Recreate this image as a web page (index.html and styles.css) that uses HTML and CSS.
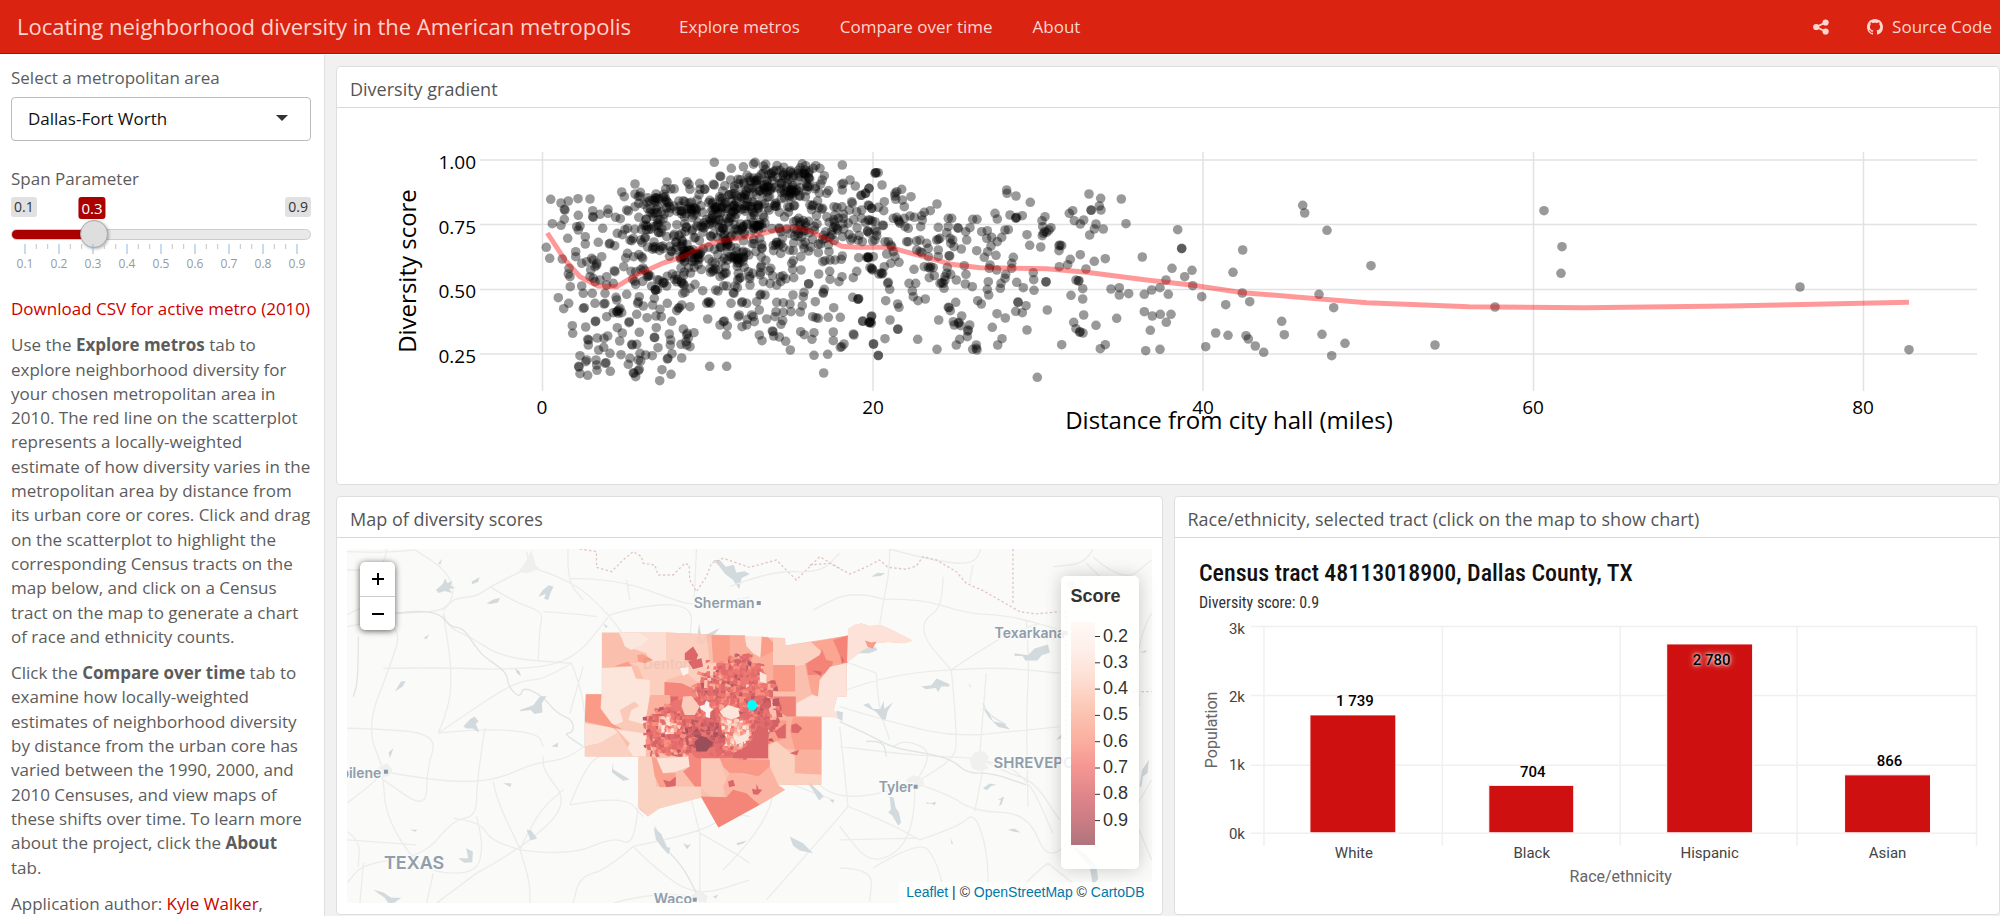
FILE: index.html
```html
<!DOCTYPE html>
<html lang="en">
<head>
<meta charset="utf-8">
<title>Locating neighborhood diversity in the American metropolis</title>
<link rel="stylesheet" href="styles.css">
</head>
<body>
<header class="navbar">
  <a class="brand" href="#">Locating neighborhood diversity in the American metropolis</a>
  <nav class="nav-links">
    <a href="#">Explore metros</a>
    <a href="#">Compare over time</a>
    <a href="#">About</a>
  </nav>
  <div class="nav-tools">
    <a href="#" aria-label="Share">
      <svg class="icon" viewBox="0 0 16 16"><g fill="currentColor"><circle cx="3.2" cy="8" r="3.1"/><circle cx="12.6" cy="3.5" r="3.1"/><circle cx="12.6" cy="12.5" r="3.1"/></g><path d="M12.6 3.5L3.2 8l9.4 4.5" fill="none" stroke="currentColor" stroke-width="1.9"/></svg>
    </a>
    <a href="#">
      <svg class="icon" viewBox="0 0 16 16"><path fill="currentColor" d="M8 0C3.58 0 0 3.58 0 8c0 3.54 2.29 6.53 5.47 7.59.4.07.55-.17.55-.38 0-.19-.01-.82-.01-1.49-2.01.37-2.53-.49-2.69-.94-.09-.23-.48-.94-.82-1.13-.28-.15-.68-.52-.01-.53.63-.01 1.08.58 1.23.82.72 1.21 1.87.87 2.33.66.07-.52.28-.87.51-1.07-1.78-.2-3.64-.89-3.64-3.95 0-.87.31-1.59.82-2.15-.08-.2-.36-1.02.08-2.12 0 0 .67-.21 2.2.82.64-.18 1.32-.27 2-.27s1.36.09 2 .27c1.53-1.04 2.2-.82 2.2-.82.44 1.1.16 1.92.08 2.12.51.56.82 1.27.82 2.15 0 3.07-1.87 3.75-3.65 3.95.29.25.54.73.54 1.48 0 1.07-.01 1.93-.01 2.2 0 .21.15.46.55.38A8.01 8.01 0 0 0 16 8c0-4.42-3.58-8-8-8z"/></svg>
      <span>Source Code</span>
    </a>
  </div>
</header>

<div class="page">
  <aside class="sidebar">
    <label class="field-label" for="metro">Select a metropolitan area</label>
    <div class="select-wrap">
      <select id="metro" class="select"><option>Dallas-Fort Worth</option></select>
      <svg class="caret" viewBox="0 0 12 6"><path d="M0 0h12L6 6z" fill="#333"/></svg>
    </div>
    <label class="field-label" for="span">Span Parameter</label>
    <div class="slider">
      <div class="slider-tags"><span class="tag">0.1</span><span class="tag">0.9</span><output class="tag tag-value" for="span">0.3</output></div>
      <input id="span" class="range" type="range" min="0.1" max="0.9" step="0.1" value="0.3">
      <svg class="scale" id="scale" viewBox="0 0 300 32"></svg>
    </div>
    <p><a class="link" href="#">Download CSV for active metro (2010)</a></p>
    <p>Use the <b>Explore metros</b> tab to explore neighborhood diversity for your chosen metropolitan area in 2010. The red line on the scatterplot represents a locally-weighted estimate of how diversity varies in the metropolitan area by distance from its urban core or cores. Click and drag on the scatterplot to highlight the corresponding Census tracts on the map below, and click on a Census tract on the map to generate a chart of race and ethnicity counts.</p>
    <p>Click the <b>Compare over time</b> tab to examine how locally-weighted estimates of neighborhood diversity by distance from the urban core has varied between the 1990, 2000, and 2010 Censuses, and view maps of these shifts over time. To learn more about the project, click the <b>About</b> tab.</p>
    <p>Application author: <a class="link" href="#">Kyle Walker</a>,</p>
  </aside>

  <main class="main">
    <section class="card">
      <h2 class="card-title">Diversity gradient</h2>
      <svg class="chart" viewBox="337 108 1662 376" role="img" aria-label="Diversity score by distance from city hall">
        <path class="grid" d="M480 160H1977M480 224.500H1977M480 289.500H1977M480 354H1977M542.500 152V391M873 152V391M1203 152V391M1533.500 152V391M1863.500 152V391"/>
        <g id="dots" class="dots"></g>
        <polyline class="trend" points="547.3,233 565,260 580,276.700 598,286 616.700,286.700 633,276.700 663,263 685,256 701.700,246.700 716.700,241.700 751.700,236 790,227 806.700,230 825,238 841.700,246.300 856.700,247.300 889,247.300 926.700,257.300 951.700,264.300 980,267.700 1046.700,268.700 1086.700,272.300 1146.700,280 1193,285.300 1243,292.700 1293,296.700 1367,302.700 1469,306.700 1585,307.700 1728,306 1909,302.300"/>
        <g class="tick-text end"><text x="476" y="169">1.00</text><text x="476" y="234">0.75</text><text x="476" y="298">0.50</text><text x="476" y="363">0.25</text></g>
        <g class="tick-text mid"><text x="542" y="414">0</text><text x="873" y="414">20</text><text x="1203" y="414">40</text><text x="1533" y="414">60</text><text x="1863" y="414">80</text></g>
        <text class="axis-text mid" x="1229" y="429">Distance from city hall (miles)</text>
        <text class="axis-text mid" transform="translate(416 271) rotate(-90)">Diversity score</text>
      </svg>
    </section>

    <section class="card">
      <h2 class="card-title">Map of diversity scores</h2>
      <div class="map">
        <svg class="map-canvas" viewBox="347 549 805 354" preserveAspectRatio="xMidYMid slice" role="img" aria-label="Census tracts around Dallas-Fort Worth">
          <rect x="340" y="540" width="830" height="380" fill="#fafaf8"/>
          <g transform="translate(330 480) scale(.33333)">
            <path class="road" d="M51 405L110 370L150 400L240 400L340 392L370 355L440 350L480 320L600 262M340 392L380 352L350 270L250 207M170 207L165 270L51 270M51 215L160 218L250 210M600 262L590 215M600 262L720 295L840 405L900 495M720 295L860 295L1060 370L1100 372M715 207L710 300L760 360M480 320L550 365L640 395L630 440L625 540M340 400L350 440L420 470L520 535L725 550M160 565L365 563L530 570L725 550L840 405M725 550L640 600L580 600L500 640L325 760M725 550L765 650L765 800M51 440L140 420L215 450L180 560L110 740L160 870M51 745L110 745L325 760L290 870L290 990L160 900M325 760L360 680L365 560L340 400M325 760L465 745L625 760L640 800M160 875L320 905L490 905L610 850L700 840L765 800M465 745L440 905L440 1010L370 1020L280 1130L100 1150L51 1210M51 970L130 910L160 875L165 1000L240 1130L310 1180L440 1180L460 1100L440 1010M440 1180L570 1110L720 975L640 870L640 830M570 1110L720 1130L850 1070L910 1100L930 940M570 1110L600 1200L600 1270M440 1180L320 1270M490 905L500 960L570 1105M720 975L880 945L940 1010M720 975L770 850L830 820M370 1015L450 1025L480 1080L570 1110M910 1100L1110 1060L1200 1000L1260 1010M910 1100L830 1170L750 1190L730 1270M910 1100L990 1180L1105 1250L1260 1200M1110 1060L1085 960M1110 1060L1110 1270M850 1270L960 1240L1105 1250M1110 1060L1200 1110L1260 1150M51 1080L260 1095M100 1150L90 1270M310 1180L290 1270M900 360L890 300M840 405L960 370L1090 380L1080 470M1100 207L1095 330L1090 380L1260 352M640 395L720 400L800 410M720 700L760 560M51 1055L90 1080L85 1160M570 1110L620 1000L700 930"/>
            <path class="river" d="M200 400L250 392L330 400L360 440L400 445L430 490L460 530L530 575L535 620L570 655L580 620L640 650L680 700L730 720L730 760L700 760L760 800M85 470L85 600L70 650M975 1040L1010 1110L1050 1150L1080 1200L1105 1250"/>
            <path class="lake" d="M318 330l20-18 8-17 6 14 16-6-6 14 14 6-18 4 8 12-22-6-18 6zM470 370l22-12 18-4-6 14-22 4zM625 350l14-20 18-14 14 4-8 16-8 24-12-4 4-14zM425 305l24-14-4 14-18 8zM325 250l12-14-6 18zM195 635l18-30 14-2-8 16zM280 475l18-12-8 14zM400 740l20-22 14-8 12 14-8 8 10 26-20-12-18 0zM570 690l40-14 20-26 20-2-14 22 2 28-24 4-12-12-30 4zM180 835l-4-18 14-12zM665 800l20-12-2 14zM850 845l0 24 50 30-20 4-34-26zM520 910l24 0-2 12zM385 1135l30 0-6-30 20 10-2 32-24 2zM590 1050l14 2 18 24-20 6zM972 1044l22 18 18 40 10 2-6 20-20-22-18-24zM1060 1090l12 18 12-16-10 4zM1220 1090l30-8-8 8-18 6zM130 1230l30 8 24 16 30 0-20 14-16 6-14-20zM1150 240l20 0 18 20 24-6 8 24 24-4 16 8-24 12-8 34-18-28-24-18-18-24zM1100 490l8-60 8 50 14-16 40-20-20 24-20 16-16 12zM555 565l14 10 4 14-12-10zM240 1050l22 0-6 6zM820 430l14 10-6 4zM1150 1250l16-6-8 12z"/>
            <path class="border" d="M750 207L800 215L800 262L845 275L880 240L910 215L935 230L940 250L975 255L985 285L1030 285L1065 250L1078 255L1080 300L1100 335L1130 290L1145 250L1180 235L1260 262L1340 240L1400 300L1470 230L1530 265"/>
            <path fill="#efefee" d="M590 240l14-30 14 46 12 10-40 14-24-4zM140 865l30-14 18 18-10 18-30 10zM1080 1250l30-20 24 20-6 20z"/>
          </g>
          <g transform="translate(840 540) scale(.33333)">
            <path class="road" d="M150 27L150 90L132 178L120 255M132 178L240 175L380 220L480 225L560 240L660 270M132 178L40 150L-80 210M310 110L310 200L250 240L255 300L335 390M150 27L270 60L400 75L425 27M400 75L390 130M335 390L480 290L600 250M335 390L110 400L-200 560M335 390L355 600L340 660L225 730M335 390L460 380L660 400M440 400L430 520L420 650M560 240L570 380L560 500L565 800M0 500L200 560L355 590L520 575L660 560M0 620L160 640L300 650L420 655L560 700L640 880M225 730L25 800L-120 690M225 730L230 890L100 985L0 860M225 730L290 640L200 600L160 620M225 730L320 760L405 815L565 820L625 970L720 870M405 815L440 650L420 655M100 985L240 900L290 960L320 1080M240 900L360 860L405 815L445 940L445 1085M0 985L100 985L90 1085M25 800L10 650L0 560M110 400L115 500L150 600M625 970L560 1020L530 1085M625 970L700 1030M0 900L230 895M420 655L500 700L580 720L660 840M240 900L150 850L25 800M760 27L740 70L640 80M760 50L850 130L936 60M740 70L780 110M936 220L890 300L900 500M936 720L890 800M890 850L936 960M-180 720L-20 780M-350 990L-240 880L-180 720L-350 640M-180 720L-160 560M-220 1080L-60 900L25 800M-330 140L-200 90L-60 100L0 40M-120 380L-20 350L110 400"/>
            <path class="river" d="M0 545L80 580L160 625L260 640L340 660L380 700L460 700L560 735M80 605L130 600L140 650M430 490L440 520L500 555"/>
            <path class="lake" d="M95 110l18-12 24 2-14 8zM55 340l20-14 34-4 4 8-24 10zM70 495l16-6 14 18 22 0 10-24 2 24 26-20-16 26-6 26-10 0-20-24-16-8zM245 440l30-4 16-20 38 16 0 8-24 0-10 16-6-12-30 4zM525 340l40 6 20-20 40-12 6 24-24 8-14 16-36 0-8-14-24 0zM430 505l14 10 18 30 30 6 20 18-36-8-28-28zM-10 512l20 6-2 26-16-10zM150 770l12 4 6 30 10 14 6 30-8 10-18-30-12-10 8-10zM680 130l20-8 40 70-16 6zM700 920l40 24 30 34 6 40-16 20-10-60-30-30zM900 740l8-50 20-30-4 40-14 10-4 30zM505 870l20-4 18 12-20-2zM900 338l22-8-4 8zM474 780l20-10-8 24-8 4 6-18zM260 786l10 4 20-4-6 12-6-6-16 0zM430 745l20-14 20 4-16 4-12 12zM650 600l16-18 6 12zM333 895l8 18-6-2zM-30 780l14 0-4 10zM385 430l12 12-6-2zM-150 890l40 20 30 30-40-8-20-14zM-92 720l14 20 22 20 8 10-14 12-18-30-14-18z"/>
            <path class="border" d="M-90 75L-30 70L30 102L60 90L85 78L120 60L145 82L200 88L230 78L250 50L290 60L350 95L380 130L430 152L480 180L540 215L590 222L660 215M520 27V190M780 455H936M680 215V640"/>
            <path fill="#f0f0ee" d="M390 660l14-22 30-4 14 18-10 20 10 14-30 8-20-8zM200 720l20-14 28 8 6 20-20 14-28-6z"/>
          </g>
          <g class="place"><text x="694" y="608">Sherman</text><text x="995" y="638">Texarkana</text><text x="879" y="792">Tyler</text><text x="654" y="904">Waco</text><text x="330" y="778">Abilene</text><text x="643" y="669">Denton</text></g>
          <g class="place place-city"><text x="994" y="768">SHREVEPORT</text></g>
          <g class="place place-state"><text x="384" y="869">TEXAS</text></g>
          <path d="M757 601h4v4h-4zM1064 631h4v4h-4zM914 785h4v4h-4zM693 898h4v4h-4zM384 770h4v4h-4z" fill="#8a99a9"/>
          <g transform="translate(560 600) scale(.33333)">
            <g class="tracts">
              <path fill="#fbb9a5" d="M126 98L320 98L510 106L555 110L676 114L677 137L865 107L865 88L885 75L905 71L930 78L965 76L1000 92L1058 122L1035 130L985 126L950 130L900 158L862 188L861 290L832 291L822 330L838 352L785 351L785 555L655 555L653 565L676 570L600 615L476 683L424 593L300 625L270 635L265 650L240 630L236 620L236 471L75 470L75 375L78 283L126 283Z"/>
              <path fill="#fddccf" d="M176 98H320V180L314 195L270 190L260 160L200 140Z"/>
              <path fill="#fde6dc" d="M180 98L240 100L265 118L245 135L215 150L195 140Z"/>
              <path fill="#fccab8" d="M320 98L440 103L450 190L480 190V245H410L380 220L320 240L314 285L270 285L235 200L210 190L320 180Z"/>
              <path fill="#fde3d8" d="M126 204L215 200L228 236L270 240V285L258 360V470H190L210 430L165 382L122 330L126 283Z"/>
              <path fill="#fde0d4" d="M75 370L155 382L175 398L120 430L75 440Z"/>
              <path fill="#fbcdbc" d="M75 440L120 430L175 398L220 470H75Z"/>
              <path fill="#fbc4b2" d="M155 380L190 365L180 330L225 305L238 318L215 330L205 360L258 375L255 400L180 390Z"/>
              <path fill="#fb917c" d="M78 283H124L122 325L155 370L188 388L160 384L75 365Z"/>
              <path fill="#fb957f" d="M162 200L205 185L216 198ZM232 165L250 163L280 180L255 190L235 185ZM510 106L455 106L460 188H512ZM605 110L625 112L642 130L640 155L600 175Z"/>
              <path fill="#fca68f" d="M510 106H556L560 140L600 175L640 155V280H610V190H510Z"/>
              <path fill="#fde0d4" d="M555 110H606L602 172L580 160L560 138Z"/>
              <path fill="#fccdbd" d="M640 114H676L677 137L755 127L790 150L770 190L700 200L640 195Z"/>
              <path fill="#fb9e88" d="M755 127L865 107V185L830 200L812 222L780 240L775 290L755 280L735 190L770 190L785 155Z"/>
              <path fill="#f4776b" d="M740 190L780 165L787 148L800 180L820 185L812 222L745 225ZM820 120L865 107V188L845 190L840 165Z"/>
              <path fill="#fde0d6" d="M865 88L885 75L905 71L930 78L965 76L1000 92L1058 122L1035 130L985 126L950 130L900 158L862 188ZM812 200L861 190V290L832 291L822 330L838 352L710 348V310L755 285L775 290L780 240Z"/>
              <path fill="#fb917c" d="M916 122L935 128L950 125L940 146L925 142ZM640 195H706V275H640Z"/>
              <path fill="#f0746a" d="M640 290H708V360L680 350L650 330Z"/>
              <path fill="#fbaa95" d="M630 350H785V525L705 520V450L625 440Z"/>
              <path fill="#fa9580" d="M700 352H785V450H705L690 390ZM630 362H680V415L630 430Z"/>
              <path fill="#fccdbb" d="M628 435L650 425L705 470V520L785 525V555H655L630 500Z"/>
              <path fill="#fbcebc" d="M236 471H280L290 560L424 560V593L300 625L265 650L236 620Z"/>
              <path fill="#fb9883" d="M275 471L290 475L310 520L348 520L345 560L300 562L285 530Z"/>
              <path fill="#fde0d4" d="M290 475L385 471L390 500L350 515L310 520Z"/>
              <path fill="#f57d70" d="M385 460H424V560L405 560L370 515L390 500Z"/>
              <path fill="#fcc2b0" d="M424 475H480L500 540L490 590L455 592L424 565Z"/>
              <path fill="#fa8f7c" d="M480 475L630 480V520L595 530L550 520L510 520L490 500Z"/>
              <path fill="#fbad98" d="M510 520L595 530L630 500L655 555L676 570L600 615L580 600L500 595L490 560Z"/>
              <path fill="#f4796c" d="M424 590L500 592L520 570L560 580L585 603L600 615L476 683Z"/>
              <path fill="#f57a6e" d="M314 246L365 250L420 275L410 290L345 300L314 285Z"/>
              <path fill="#fbab96" d="M272 285H330L340 340H300L258 360Z"/>
              <path fill="#d9575b" d="M332 290H355V350H332ZM375 160L400 140L415 165L408 185L375 180ZM385 185L425 175L430 200L400 208ZM758 212L785 215V230ZM845 168L853 180L848 190ZM645 395L678 370V415L655 415ZM695 375L710 370L728 385L715 400L695 398ZM690 460L718 450L712 466ZM310 540L330 545L348 530V558L320 562ZM505 545L520 540L526 558L508 562ZM577 567L590 570L590 552L597 568L608 570L595 585L580 583ZM645 325L665 340L655 345Z"/>
              <path fill="#e96662" d="M470 190H600L625 300V475H410L395 460H300L262 430V360L345 300L420 290L470 240Z"/>
              <g id="tracts"></g>
              <path fill="#d7565a" d="M520 460L560 440L580 415L590 380L625 385V475H520Z"/>
              <path fill="#8f3c49" d="M405 425L425 408L440 412L460 430L440 455L410 455Z"/>
              <path fill="#fde4da" d="M480 335L505 315L535 325L540 350L515 358L490 350ZM525 415L560 400L568 420L530 435ZM600 215L620 225L620 250L600 245Z"/>
              <path fill="#fcc6b5" d="M370 290L395 288L420 320L405 345L375 345L365 320Z"/>
              <path fill="#fdf3f0" d="M420 318l15-4 4-12 10 6 0 14 12 6-10 8 0 18-12-2-2-16-14-8zM360 205l26-3 0 18-16 8z"/>
            </g>
            <ellipse cx="577" cy="316" rx="15" ry="16" fill="#0ff"/>
          </g>
        </svg>
        <div class="zoom"><button type="button" aria-label="Zoom in"><svg viewBox="0 0 14 14"><path d="M7 1v12M1 7h12"/></svg></button><button type="button" aria-label="Zoom out"><svg viewBox="0 0 14 14"><path d="M1 7h12"/></svg></button></div>
        <div class="legend">
          <strong>Score</strong>
          <svg viewBox="0 0 58 224">
            <defs><linearGradient id="ramp" x1="0" x2="0" y1="0" y2="1"><stop offset="0" stop-color="#fff8f5"/><stop offset=".12" stop-color="#fef0ea"/><stop offset=".25" stop-color="#fddfd3"/><stop offset=".4" stop-color="#fcc5b3"/><stop offset=".53" stop-color="#fbaf9f"/><stop offset=".65" stop-color="#f59693"/><stop offset=".78" stop-color="#df858a"/><stop offset=".9" stop-color="#c97b83"/><stop offset="1" stop-color="#ae757d"/></linearGradient></defs>
            <rect width="24" height="223" fill="url(#ramp)"/>
            <g id="legend-ticks"></g>
          </svg>
        </div>
        <div class="attribution"><a href="#">Leaflet</a> | © <a href="#">OpenStreetMap</a> © <a href="#">CartoDB</a></div>
      </div>
    </section>

    <section class="card">
      <h2 class="card-title">Race/ethnicity, selected tract (click on the map to show chart)</h2>
      <svg class="chart" viewBox="1175 538 825 376" role="img" aria-label="Population by race and ethnicity">
        <text class="bar-title" x="1199" y="581">Census tract 48113018900, Dallas County, TX</text>
        <text class="bar-sub" x="1199" y="608">Diversity score: 0.9</text>
        <path class="bar-grid" d="M1251 626.500H1977M1251 695.500H1977M1251 765.500H1977M1251 833.500H1977M1264 626V846M1442.500 626V846M1620.500 626V846M1797.500 626V846M1977 626V846"/>
        <path class="bars" d="M1310 715h86v118h-86zM1489 785.500h85v47.500h-85zM1667 644h86v189h-86zM1845 775h86v58h-86z"/>
        <g class="bar-tick end"><text x="1245" y="634">3k</text><text x="1245" y="702">2k</text><text x="1245" y="770">1k</text><text x="1245" y="839">0k</text></g>
        <g class="bar-tick mid"><text x="1354" y="858">White</text><text x="1532" y="858">Black</text><text x="1710" y="858">Hispanic</text><text x="1888" y="858">Asian</text></g>
        <g class="bar-value mid"><text x="1355" y="706">1 739</text><text x="1533" y="777">704</text><text class="glow" x="1712" y="665">2 780</text><text x="1890" y="766">866</text></g>
        <text class="bar-axis mid" x="1621" y="882">Race/ethnicity</text>
        <text class="bar-axis mid" transform="translate(1217 730) rotate(-90)">Population</text>
      </svg>
    </section>
  </main>
</div>
<script src="charts.js"></script>
</body>
</html>
```
FILE: styles.css
```css
* { box-sizing: border-box; }
body { margin: 0; font: 17px/1.43 "Open Sans", sans-serif; color: #5c5c5c; background: #f1f1f1; min-height: 100vh; display: flex; flex-direction: column; overflow-x: hidden; }
a { text-decoration: none; }
p { margin: 0 0 12px; }
svg { display: block; }

.navbar { display: flex; align-items: center; height: 54px; flex: none; padding: 1px 8px 0 17px; gap: 48px; background: #da2310; border-bottom: 1px solid #b80b05; box-shadow: 0 1px 0 #fff; position: relative; }
.navbar a { color: #ffd5d0; display: flex; align-items: center; gap: 9px; }
.navbar .brand { font-size: 22px; }
.nav-links { display: flex; gap: 40px; }
.nav-tools { display: flex; gap: 38px; margin-left: auto; }
.icon { width: 16px; height: 16px; }

.page { flex: 1; display: grid; grid-template-columns: 325px 1fr; }
.sidebar { background: #fff; border-right: 1px solid #e0e0e0; padding: 12px 13px 0 11px; }
.sidebar p:last-child { margin: 0; }
.field-label { display: block; line-height: 24px; }
.select-wrap { position: relative; margin: 7px 0 26px; }
.select { appearance: none; width: 100%; height: 44px; padding: 0 16px; border: 1px solid #bbb; border-radius: 4px; background: #fff; font: inherit; color: #111; }
.caret { position: absolute; right: 23px; top: 18px; width: 12px; height: 6px; pointer-events: none; }
.slider { margin-bottom: 25px; padding-top: 6px; }
.slider-tags { position: relative; display: flex; justify-content: space-between; height: 23px; }
.tag { height: 20px; padding: 0 3px; border-radius: 3px; background: #e1e1e1; color: #333; font-size: 14px; line-height: 20px; }
.tag-value { position: absolute; left: 27%; transform: translateX(-50%); height: 22px; background: #a00; color: #fff; line-height: 22px; font-size: 15px; }
.range { appearance: none; display: block; width: 100%; height: 28px; margin: 0; background: none; }
.range::-webkit-slider-runnable-track { height: 11px; border-radius: 6px; border: 1px solid #ccc; background: linear-gradient(90deg, #a00 27%, #e9e9e9 27%); }
.range::-webkit-slider-thumb { appearance: none; width: 28px; height: 28px; margin-top: -10px; border-radius: 50%; border: 1px solid #aaa; background: #dedede; box-shadow: 1px 1px 3px rgba(0, 0, 0, .3); }
.scale { width: 100%; margin-top: -8px; font-size: 12px; fill: #999; }
.link { color: #c00; }

.main { padding: 12px 0 2px 11px; display: grid; grid-template-columns: 1fr 1fr; gap: 11px; align-content: start; min-width: 0; }
.card { background: #fff; border: 1px solid #dedede; border-radius: 4px; min-width: 0; overflow: hidden; }
.card:first-child { grid-column: 1 / -1; }
.card-title { margin: 0; height: 41px; padding: 0 13px; font-size: 18px; font-weight: 400; line-height: 44px; color: #555; border-bottom: 1px solid #d9d9d9; }
.chart { width: 100%; }

.grid { fill: none; stroke: #e2e2e2; stroke-width: 1.5; }
.dots { fill: #000; fill-opacity: .4; }
.trend { fill: none; stroke: #f00; stroke-opacity: .4; stroke-width: 5; }
.tick-text { font-size: 19px; fill: #000; }
.axis-text { font-size: 24px; fill: #000; }
.mid { text-anchor: middle; }
.end { text-anchor: end; }

.map { position: relative; margin: 11px 10px 10px; }
.map-canvas { width: 100%; }
.road { fill: none; stroke: #ececeb; stroke-width: 4; stroke-linejoin: round; }
.river { fill: none; stroke: #dfe4e7; stroke-width: 4; stroke-linejoin: round; }
.lake { fill: #d3dade; }
.border { fill: none; stroke: #e3c3c9; stroke-width: 4; stroke-dasharray: 7 7; }
.place { font: 600 14px Inter, sans-serif; fill: #8f9dac; stroke: #fafaf8; stroke-width: 3px; paint-order: stroke; }
.place-city { font-size: 15px; }
.place-state { font-size: 18px; }
.tracts { opacity: .9; }
.zoom { position: absolute; left: 13px; top: 13px; width: 35px; border-radius: 5px; background: #fff; box-shadow: 0 1px 6px rgba(0, 0, 0, .65); }
.zoom button { display: grid; place-items: center; width: 100%; height: 34px; padding: 0; border: 0; background: none; }
.zoom button + button { border-top: 1px solid #ccc; }
.zoom svg { width: 14px; height: 14px; stroke: #000; stroke-width: 2; fill: none; }
.legend { position: absolute; right: 13px; top: 27px; width: 78px; height: 293px; padding: 8px 10px; border-radius: 5px; background: rgba(255, 255, 255, .85); box-shadow: 0 0 18px rgba(0, 0, 0, .2); font: 18px/24px "Liberation Sans", sans-serif; color: #333; }
.legend strong { display: block; margin-bottom: 14px; }
.legend svg { width: 58px; font-size: 18px; fill: #333; overflow: visible; }
.attribution { position: absolute; right: 0; bottom: 0; height: 21px; padding: 0 7px; background: rgba(255, 255, 255, .7); font: 14px/21px "Liberation Sans", sans-serif; color: #333; }
.attribution a { color: #0078a8; }

.bar-grid { fill: none; stroke: #f0f0f0; stroke-width: 1.5; }
.bars { fill: #cf1010; stroke: #fff; stroke-width: 1; }
.bar-title { font: 500 24px "Roboto Condensed", Roboto, sans-serif; fill: #111; }
.bar-sub { font: 16px "Roboto Condensed", Roboto, sans-serif; fill: #333; }
.bar-tick { font: 15px Roboto, sans-serif; fill: #444; }
.bar-axis { font: 16px Roboto, sans-serif; fill: #666; }
.bar-value { font: 500 15px Roboto, sans-serif; fill: #000; }
.glow { text-shadow: 0 0 6px #fff, 0 0 3px #fff; }
```
FILE: charts.js
```js
let seed = 20103;
function rnd() {
  seed = (seed * 1664525 + 1013904223) % 4294967296;
  return seed / 4294967296;
}
function gauss() {
  return rnd() + rnd() + rnd() + rnd() - 2;
}
function parse(text) {
  return text.split(";").map(p => p.split(",").map(Number));
}

/* Tract positions: two panels stored at three units per chart pixel. */
const near = "512,208;543,219;565,213;594,206;630,207;555,240;553,238;553,268;517,281;543,286;595,256;499,352;509,385;563,325;590,290;600,288;595,300;638,242;640,262;638,260;660,253;684,238;684,250;707,262;721,266;725,186;733,200;765,162;765,192;775,200;780,198;791,223;765,230;740,240;745,243;861,156;828,192;828,205;826,218;860,215;858,210;850,202;668,295;712,310;727,314;743,295;655,337;616,320;616,342;688,342;690,340;704,347;755,332;750,330;760,325;547,387;587,365;587,380;605,400;620,395;635,385;650,400;640,390;665,380;645,410;650,405;565,432;570,440;567,415;571,470;605,468;610,490;637,490;630,440;640,445;645,455;660,450;680,440;680,465;632,420;535,503;566,520;551,536;610,535;613,533;645,520;672,522;675,520;675,490;700,460;705,425;703,422;731,410;737,384;761,380;785,380;788,385;767,425;740,493;708,502;710,510;716,540;710,545;715,550;720,535;725,548;700,548;712,544;680,560;747,578;748,575;778,607;647,573;646,575;617,591;577,587;578,610;712,593;727,609;719,633;755,643;757,645;770,643;770,553;773,520;775,515;790,528;801,563;818,525;823,505;778,500;827,480;825,478;850,460;853,458;860,468;810,437;862,520;840,538;828,558;844,560;875,574;829,593;823,622;824,623;868,612;872,630;871,645;895,535;898,533;890,542;905,525;930,530;910,597;922,610;920,615;942,608;925,625;918,635;920,645;930,650;903,643;834,653;817,677;797,675;780,670;775,690;782,693;750,685;745,703;723,674;690,670;656,660;671,652;625,645;623,628;626,630;652,624;672,625;683,618;600,677;620,690;617,695;648,690;676,700;678,698;650,705;651,721;691,724;596,709;597,711;600,731;623,736;762,730;767,740;778,718;775,722;760,728;839,752;873,733;846,719;862,687;864,685;876,671;905,684;989,709;1040,709;983,567;1040,615;1020,585;1030,575;1033,573;1042,588;985,515;987,517;992,520;980,520;1053,520;1085,518;1087,515;1060,488;1062,490;1007,480;1014,483;968,482;1040,468;945,463;930,475;915,487;908,490;905,460;912,465;877,432;1075,560;1078,555;1086,590;1100,585;1102,568;1115,555;1120,560;1123,575;1138,540;1130,515;1100,520;1140,495;1143,493;1155,495;1190,517;1210,518;1230,522;1239,495;1272,487;1270,500;1286,462;1286,461;1267,527;1261,546;1233,545;1210,547;1188,545;1185,560;1160,567;1203,583;1208,572;1138,615;1146,632;1177,603;1179,605;1181,618;1198,621;1217,634;1231,660;1262,605;1273,614;1302,608;1296,628;1302,676;1343,673;1331,729;1360,606;1360,632;1392,642;1385,650;1381,652;1420,612;1422,615;1481,642;1495,677;1448,574;1470,577;1474,560;1467,578;1381,562;1345,562;1315,565;1308,563;1298,560;1361,533;1306,515;1330,490;1330,487;1333,478;1418,502;1435,507;1436,506;1433,508;1420,443;1430,424;1476,415;1497,432;1436,383;1464,382;1465,380;1377,455;1386,440;1350,448;1349,424;1316,432;1263,420;1241,443;1238,418;1235,400;1240,392;1328,395;1335,392;1350,390;1365,390;1384,388;1387,378;1315,368;1347,365;1240,362;1387,105;1340,190;1410,150;1426,168;1387,180;1385,163;1390,160;1467,175;1442,196;1456,190;1415,215;1417,220;1362,230;1365,255;1465,225;1475,235;1488,128;1447,335;1485,330;1412,330;1408,240;1430,245;1445,240;1470,270;1390,265;1003,97;1054,115;1052,150;1022,140;1020,138;1000,163;1003,165;959,160;960,178;975,178;921,155;927,163;930,178;1028,183;1125,97;1157,103;1150,108;1320,115;1333,137;1327,150;1277,107;1300,115;1300,225;1325,238;1328,235;1202,455;1190,465;1150,455;1110,465;1105,425;1075,430;1065,468";
const far = "47,128;55,128;45,130;66,165;27,175;17,190;5,196;73,215;71,242;27,227;35,235;55,232;125,178;105,190;110,185;105,198;107,208;127,210;153,200;133,230;231,222;211,242;193,247;185,257;163,262;150,258;187,270;182,290;100,265;110,262;117,275;120,280;115,270;135,290;145,295;133,265;68,285;70,287;45,300;50,305;23,304;50,317;38,333;45,275;25,270;5,265;85,335;75,335;92,345;95,350;80,372;100,365;105,380;117,397;140,335;145,335;170,333;180,330;170,360;180,365;185,368;205,355;200,340;235,328;240,325;230,330;265,265;275,265;235,292;260,308;265,290;293,293;295,295;317,305;330,293;338,268;351,268;365,305;382,302;380,325;395,322;412,335;425,322;435,300;445,299;405,250;412,267;440,180;441,190;468,198;511,217;450,255;467,263;468,265;470,262;487,257;320,330;270,325;278,330;272,340;282,350;304,357;235,360;267,377;269,378;350,362;383,365;393,348;373,382;408,376;235,380;205,380;162,418;193,410;205,412;212,410;220,413;210,415;208,443;223,437;262,412;313,407;318,433;316,462;337,470;289,450;272,433;255,440;245,458;250,460;255,450;252,475;260,430;240,460;147,460;167,460;157,483;160,500;174,512;196,507;113,522;117,532;77,512;89,478;85,457;83,460;68,430;65,432;63,428;73,410;92,400;35,417;30,413;38,420;20,382;24,383;40,380;26,384;90,570;113,598;114,597;75,626;40,642;55,676;32,575;34,580;35,558;28,577;8,573;173,628;231,658;236,570;287,517;265,532;267,533;271,542;305,558;280,575;283,585;297,577;295,580;302,587;329,585;323,603;325,600;322,620;299,628;289,645;338,658;349,645;351,660;349,655;397,592;411,551;436,564;426,626;413,645;353,512;364,522;382,478;386,495;385,455;390,405;388,415;410,420;421,475;423,460;437,433;435,445;455,415;455,400;460,382;470,457;490,473;474,516;474,517;498,527;467,544;487,548;562,540;501,600;532,742;522,481;521,449;520,428;558,455;558,456;501,314;509,346;542,351;547,317;550,310;560,307;573,293;548,290;555,260;546,272;567,300;554,305;597,347;600,345;605,347;597,362;598,410;623,404;631,388;661,374;678,417;648,450;655,453;657,452;668,476;668,507;633,496;671,555;641,577;648,596;660,605;669,609;659,607;708,586;605,644;721,656;736,644;703,394;736,386;770,565;753,477;778,473;778,495;806,491;784,207;798,281;730,297;703,297;708,282;689,315;687,192;722,205;718,228;723,240;693,240;694,241;638,242;628,250;643,272;671,270;661,282;847,381;853,493;875,480;900,473;918,450;925,493;853,545;877,558;901,553;933,553;919,577;871,601;857,662;900,658;936,415;974,440;996,421;998,467;1025,500;953,299;965,355;965,356;1037,650;1067,609;1104,616;1158,617;1165,627;1186,648;1211,667;1097,524;1119,427;1148,360;1147,489;1169,515;1265,574;1273,614;1328,226;1334,249;1401,301;1377,493;1421,533;1386,613;1455,640;1415,677;1533,407;1725,645;1905,531;2052,242;2106,350;2103,430;2820,471;3147,659";

/* Dense clumps: centre x, centre y, spread x, spread y, count. */
const clumps = [[815,265,34,38,48],[890,210,40,25,16],[930,238,26,14,20],[1000,275,60,30,54],[1060,215,45,22,42],[1150,145,45,28,34],[1240,130,45,18,32],[1245,178,50,12,36],[1110,170,40,14,18],[1110,235,50,14,22],[1110,290,40,12,28],[880,355,50,18,38],[930,300,60,25,12],[1000,400,70,32,42],[930,385,30,25,18],[1075,378,18,8,14],[1040,340,40,15,16],[1180,345,45,25,22],[1270,315,28,25,26],[1365,285,45,25,28],[1150,432,50,12,14],[1200,220,60,20,20],[1190,270,60,20,12],[870,460,55,25,14],[780,430,40,25,11],[1470,290,35,25,8],[1260,260,40,20,8],[1100,460,60,30,6]];

const circles = [];
function dot(x, y) {
  circles.push(`<circle cx="${x.toFixed(1)}" cy="${y.toFixed(1)}" r="4.8"/>`);
}
parse(near).forEach(([x, y]) => dot(380 + x / 3, 130 + y / 3));
parse(far).forEach(([x, y]) => dot(860 + x / 3, 130 + y / 3));
clumps.forEach(([cx, cy, sx, sy, n]) => {
  for (let i = 0; i < n; i++) {
    dot(380 + (cx + gauss() * sx * 1.5) / 3, 130 + Math.max(100, cy + gauss() * sy * 1.5) / 3);
  }
});
document.getElementById("dots").innerHTML = circles.join("");

/* Roads: round each bend through the midpoints of its segments. */
document.querySelectorAll(".road, .river").forEach(path => {
  const lines = path.getAttribute("d").split("M").filter(Boolean);
  path.setAttribute("d", lines.map(line => {
    const p = line.split("L").map(s => s.trim().split(" ").map(Number));
    let d = `M${p[0]}`;
    for (let i = 1; i < p.length - 1; i++) {
      const mx = (p[i][0] + p[i + 1][0]) / 2, my = (p[i][1] + p[i + 1][1]) / 2;
      d += `Q${p[i]} ${mx},${my}`;
    }
    return d + `L${p[p.length - 1]}`;
  }).join(""));
});

/* Urban tracts: a jittered mesh with one shade per cell. */
const shades = ["#fde3d8", "#fccab8", "#fba48e", "#f98471", "#ec6964", "#e05c5e", "#cf5258", "#b84853", "#9c404d"];
const cells = [];
const step = 9;
function vertex(i, j) {
  const a = Math.sin(i * 127.1 + j * 311.7) * 43758.5453;
  const b = Math.sin(i * 269.5 + j * 183.3) * 43758.5453;
  return [i * step + (a - Math.floor(a) - 0.5) * 8, j * step + (b - Math.floor(b) - 0.5) * 8];
}
for (let i = 28; i < 78; i++) {
  for (let j = 18; j < 52; j++) {
    const x = i * step, y = j * step;
    const ft = Math.hypot((x - 335) / 85, (y - 395) / 75);
    const da = Math.hypot((x - 520) / 120, (y - 325) / 150);
    const d = Math.min(ft, da);
    if (d > 0.75 + rnd() * 0.45) continue;
    let tone = 4.5 + gauss() * 2.1;
    if (Math.hypot(x - 515, y - 390) < 50) tone = 1.8 + gauss() * 3;
    if (Math.hypot(x - 320, y - 375) < 28) tone = 2 + gauss() * 3;
    if (Math.hypot(x - 430, y - 405) < 60) tone = 6.3 + gauss() * 2.4;
    if (x > 585 && y > 290) tone = 5.6 + gauss() * 1.5;
    const shade = shades[Math.max(0, Math.min(8, Math.round(tone)))];
    const wide = rnd() < 0.3 ? 2 : 1, tall = rnd() < 0.25 ? 2 : 1;
    const q = [vertex(i, j), vertex(i + wide, j), vertex(i + wide, j + tall), vertex(i, j + tall)];
    cells.push(`<path fill="${shade}" d="M${q.map(p => p.map(n => n.toFixed(0)).join(" ")).join("L")}Z"/>`);
  }
}
document.getElementById("tracts").innerHTML = cells.join("");

/* Slider scale */
let marks = "";
for (let k = 0; k <= 24; k++) {
  const x = 14 + k * 272 / 24, major = k % 3 === 0;
  marks += `<path d="M${x.toFixed(1)} 4v${major ? 10 : 5}" stroke="${major ? "#8fb9de" : "#c4c4c4"}"/>`;
  if (major) marks += `<text x="${x.toFixed(1)}" y="28" text-anchor="middle">${(0.1 + k / 30).toFixed(1)}</text>`;
}
document.getElementById("scale").innerHTML = marks;

/* Legend ticks */
let ticks = "";
for (let k = 0; k < 8; k++) {
  const y = 14.500 + k * 26.3;
  ticks += `<path d="M24 ${y.toFixed(1)}h5" stroke="#333"/><text x="32" y="${(y + 5).toFixed(1)}">0.${k + 2}</text>`;
}
document.getElementById("legend-ticks").innerHTML = ticks;
```
